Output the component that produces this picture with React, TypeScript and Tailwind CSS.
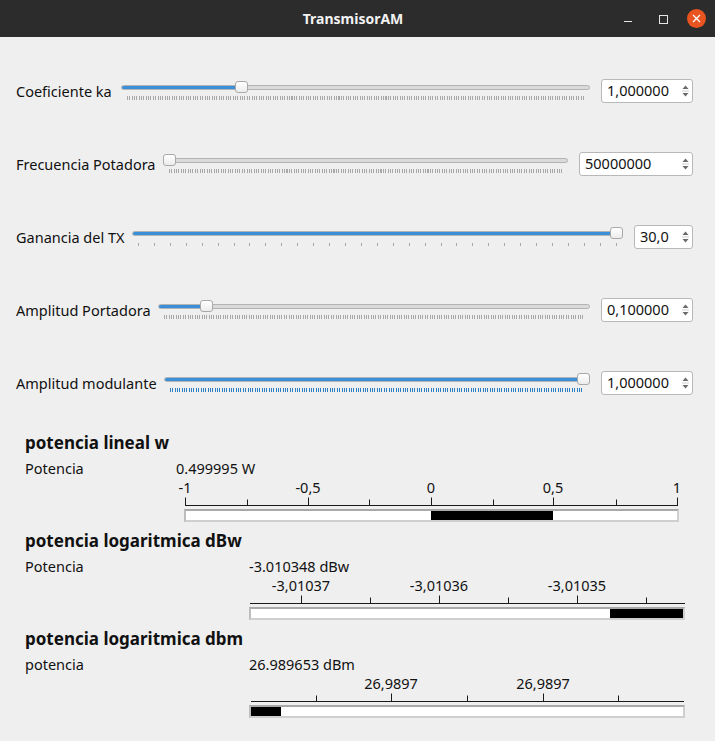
import React from "react";

type Row = {
  label: string;
  labelW: number;
  frac: number;
  spinW: number;
  value: string;
  ticks: "dense" | "sparse" | "blue";
};

const rows: Row[] = [
  { label: "Coeficiente ka", labelW: 105, frac: 0.25, spinW: 92, value: "1,000000", ticks: "dense" },
  { label: "Frecuencia Potadora", labelW: 147, frac: 0, spinW: 114, value: "50000000", ticks: "dense" },
  { label: "Ganancia del TX", labelW: 116, frac: 1, spinW: 59, value: "30,0", ticks: "sparse" },
  { label: "Amplitud Portadora", labelW: 142, frac: 0.1, spinW: 92, value: "0,100000", ticks: "dense" },
  { label: "Amplitud modulante", labelW: 148, frac: 1, spinW: 92, value: "1,000000", ticks: "blue" },
];

function Slider({ frac, ticks }: { frac: number; ticks: Row["ticks"] }) {
  const pos = `calc(${frac} * (100% - 13px))`;
  const fill = `calc(${frac} * (100% - 13px) + 6px)`;
  return (
    <div className="flex-1 flex flex-col self-start mt-[2px]">
      <div className="relative h-[12px] flex items-center">
        <div className="w-full h-[5px] rounded-full border border-[#b3b3b3] bg-[#dadada] overflow-hidden flex">
          <div className="h-full bg-[#3b8fd8] border-r border-[#2a6aa6]" style={{ width: fill }} />
        </div>
        <div
          className="absolute top-0 w-[13px] h-[12px] rounded-[3px] border border-[#a9a9a9] bg-gradient-to-b from-white to-[#ececec]"
          style={{ left: pos }}
        />
      </div>
      <div className="mt-[3px] mx-[6px] h-[4px]">
        {ticks === "dense" && (
          <div className="w-full h-full bg-[repeating-linear-gradient(90deg,#a8a8a8_0px,#a8a8a8_1px,transparent_1px,transparent_2.35px)]" />
        )}
        {ticks === "blue" && (
          <div className="w-full h-full bg-[repeating-linear-gradient(90deg,#2f7dc2_0px,#2f7dc2_1px,transparent_1px,transparent_2.35px)]" />
        )}
        {ticks === "sparse" && (
          <div className="w-full h-full flex justify-between">
            {Array.from({ length: 31 }).map((_, i) => (
              <div key={i} className="w-px h-[3px] mt-[1px] bg-[#a8a8a8]" />
            ))}
          </div>
        )}
      </div>
    </div>
  );
}

function SpinBox({ w, value }: { w: number; value: string }) {
  return (
    <div
      className="ml-[11px] h-[24px] bg-white border border-[#b8b8b8] rounded-[3px] flex items-center shrink-0"
      style={{ width: w }}
    >
      <div className="flex-1 pl-[5px] text-[14.5px] text-[#111]">{value}</div>
      <div className="w-[14px] h-full flex items-center justify-center">
        <svg width="9" height="16" viewBox="0 0 9 16">
          <path d="M1.5 6 L4.5 2.5 L7.5 6 Z" fill="#6a6a6a" />
          <path d="M1 8 L8 8" stroke="#cfcfcf" strokeWidth="1" />
          <path d="M1.5 10 L4.5 13.5 L7.5 10 Z" fill="#6a6a6a" />
        </svg>
      </div>
    </div>
  );
}

type Gauge = {
  title: string;
  label: string;
  value: string;
  valueOff: number;
  scaleOff: number;
  width: number;
  axis: [number, number];
  majors: { x: number; t: string }[];
  minors: number[];
  fill: [number, number];
};

const gauges: Gauge[] = [
  {
    title: "potencia lineal w",
    label: "Potencia",
    value: "0.499995 W",
    valueOff: 151,
    scaleOff: 159,
    width: 495,
    axis: [1, 493],
    majors: [
      { x: 1, t: "-1" },
      { x: 124, t: "-0,5" },
      { x: 247, t: "0" },
      { x: 369, t: "0,5" },
      { x: 493, t: "1" },
    ],
    minors: [63, 185, 309, 432],
    fill: [245, 122],
  },
  {
    title: "potencia logaritmica dBw",
    label: "Potencia",
    value: "-3.010348 dBw",
    valueOff: 224,
    scaleOff: 224,
    width: 436,
    axis: [1, 435],
    majors: [
      { x: 52, t: "-3,01037" },
      { x: 190, t: "-3,01036" },
      { x: 328, t: "-3,01035" },
    ],
    minors: [121, 259, 397],
    fill: [359, 73],
  },
  {
    title: "potencia logaritmica dbm",
    label: "potencia",
    value: "26.989653 dBm",
    valueOff: 224,
    scaleOff: 224,
    width: 436,
    axis: [2, 434],
    majors: [
      { x: 142, t: "26,9897" },
      { x: 294, t: "26,9897" },
    ],
    minors: [67, 218, 369],
    fill: [0, 30],
  },
];

function GaugeBlock({ g }: { g: Gauge }) {
  return (
    <div className="flex flex-col pl-[25px] mb-[9px]">
      <div className="h-[20px] leading-[20px] text-[17px] font-bold text-[#111]">{g.title}</div>
      <div className="mt-[7px] h-[16px] leading-[16px] flex text-[14.5px] text-[#111]">
        <div style={{ width: g.valueOff }}>{g.label}</div>
        <div>{g.value}</div>
      </div>
      <div className="flex flex-col" style={{ marginLeft: g.scaleOff, width: g.width }}>
        <div className="relative mt-[3px] h-[16px] leading-[16px] text-[14.5px] text-[#111]">
          {g.majors.map((m, i) => (
            <span key={i} className="absolute top-0 -translate-x-1/2 whitespace-nowrap" style={{ left: m.x }}>
              {m.t}
            </span>
          ))}
        </div>
        <svg className="mt-[2px]" width={g.width} height="9" viewBox={`0 0 ${g.width} 9`}>
          <line x1={g.axis[0]} y1="8.5" x2={g.axis[1] + 1} y2="8.5" stroke="#1a1a1a" strokeWidth="1" />
          {g.majors.map((m, i) => (
            <line key={i} x1={m.x + 0.5} y1="0.5" x2={m.x + 0.5} y2="8.5" stroke="#1a1a1a" strokeWidth="1" />
          ))}
          {g.minors.map((x, i) => (
            <line key={i} x1={x + 0.5} y1="2.5" x2={x + 0.5} y2="8.5" stroke="#1a1a1a" strokeWidth="1" />
          ))}
        </svg>
        <div className="mt-[3px] h-[13px] bg-white border-2 border-t-[#a9a9a9] border-l-[#bdbdbd] border-r-[#cfcfcf] border-b-[#cfcfcf] flex">
          <div style={{ width: g.fill[0] }} />
          <div className="h-full bg-black" style={{ width: g.fill[1] }} />
        </div>
      </div>
    </div>
  );
}

export default function App() {
  return (
    <div
      className="w-[715px] h-[741px] bg-[#efefef] flex flex-col overflow-hidden"
      style={{ fontFamily: '"Noto Sans", "DejaVu Sans", sans-serif' }}
    >
      <div className="h-[37px] shrink-0 bg-[#2c2c2c] flex items-center">
        <div className="flex-1" />
        <div className="text-[14px] font-bold text-[#f2f2f2]">TransmisorAM</div>
        <div className="flex-1 flex items-center justify-end pr-[9px]">
          <div className="w-[8px] h-[1.5px] bg-[#e6e6e6] mt-[6px]" />
          <div className="ml-[27px] w-[9px] h-[9px] border border-[#e6e6e6] mt-[1px]" />
          <div className="ml-[19px] w-[19px] h-[19px] rounded-full bg-[#e95420] flex items-center justify-center">
            <svg width="9" height="9" viewBox="0 0 9 9">
              <path d="M1 1 L8 8 M8 1 L1 8" stroke="#fff" strokeWidth="1.3" />
            </svg>
          </div>
        </div>
      </div>

      <div className="flex flex-col gap-[49px] mt-[42px] pl-[16px] pr-[22px]">
        {rows.map((r, i) => (
          <div key={i} className="h-[24px] flex items-center">
            <div className="shrink-0 whitespace-nowrap text-[14.5px] text-[#111] mt-[1px]" style={{ width: r.labelW }}>
              {r.label}
            </div>
            <Slider frac={r.frac} ticks={r.ticks} />
            <SpinBox w={r.spinW} value={r.value} />
          </div>
        ))}
      </div>

      <div className="flex flex-col mt-[38px]">
        {gauges.map((g, i) => (
          <GaugeBlock key={i} g={g} />
        ))}
      </div>
    </div>
  );
}
